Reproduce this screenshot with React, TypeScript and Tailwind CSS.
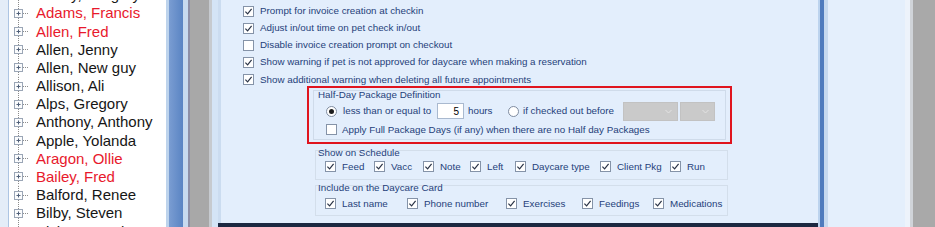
import React from 'react';

type Person = { name: string; red?: boolean };

const people: Person[] = [
  { name: 'Abbey, Gregory' },
  { name: 'Adams, Francis', red: true },
  { name: 'Allen, Fred', red: true },
  { name: 'Allen, Jenny' },
  { name: 'Allen, New guy' },
  { name: 'Allison, Ali' },
  { name: 'Alps, Gregory' },
  { name: 'Anthony, Anthony' },
  { name: 'Apple, Yolanda' },
  { name: 'Aragon, Ollie', red: true },
  { name: 'Bailey, Fred', red: true },
  { name: 'Balford, Renee' },
  { name: 'Bilby, Steven' },
  { name: 'Bishop, Frank' },
];

const mainOptions = [
  { label: 'Prompt for invoice creation at checkin', checked: true },
  { label: 'Adjust in/out time on pet check in/out', checked: true },
  { label: 'Disable invoice creation prompt on checkout', checked: false },
  { label: 'Show warning if pet is not approved for daycare when making a reservation', checked: true },
  { label: 'Show additional warning when deleting all future appointments', checked: true },
];

// fixed column widths, like the WinForms layout
const scheduleItems = [
  { label: 'Feed', w: 'w-[49px]' },
  { label: 'Vacc', w: 'w-[49px]' },
  { label: 'Note', w: 'w-[47px]' },
  { label: 'Left', w: 'w-[45px]' },
  { label: 'Daycare type', w: 'w-[85px]' },
  { label: 'Client Pkg', w: 'w-[70px]' },
  { label: 'Run', w: 'w-auto' },
];

const cardItems = [
  { label: 'Last name', w: 'w-[82px]' },
  { label: 'Phone number', w: 'w-[99px]' },
  { label: 'Exercises', w: 'w-[76px]' },
  { label: 'Feedings', w: 'w-[71px]' },
  { label: 'Medications', w: 'w-auto' },
];

const CheckBox: React.FC<{ checked?: boolean }> = ({ checked }) => (
  <span className="flex h-[11px] w-[11px] shrink-0 items-center justify-center border border-[#8593a8] bg-white">
    {checked && (
      <svg width="9" height="9" viewBox="0 0 9 9">
        <path d="M1.4 4.6 L3.6 6.8 L7.6 1.8" stroke="#2b3447" strokeWidth="1.2" fill="none" />
      </svg>
    )}
  </span>
);

const Radio: React.FC<{ checked?: boolean }> = ({ checked }) => (
  <span className="flex h-[11px] w-[11px] shrink-0 items-center justify-center rounded-full border border-[#7f8ca0] bg-white">
    {checked && <span className="h-[5px] w-[5px] rounded-full bg-[#1c1c1c]" />}
  </span>
);

const Combo: React.FC<{ w: string }> = ({ w }) => (
  <span className={`flex h-[19px] ${w} items-center justify-end border border-[#c2c2c2] bg-[#cacaca] pr-[5px]`}>
    <svg width="7" height="5" viewBox="0 0 7 5">
      <path d="M0.5 1 L3.5 4 L6.5 1" stroke="#e2e2e2" strokeWidth="1" fill="none" />
    </svg>
  </span>
);

const TreeRow: React.FC<{ person: Person }> = ({ person }) => (
  <div className="flex h-[18.18px] items-center">
    <svg width="27" height="18.18" viewBox="0 0 27 18.18" className="shrink-0">
      <line x1="9.5" y1="0" x2="9.5" y2="18.18" stroke="#8a8a8a" strokeWidth="1" strokeDasharray="1 1" />
      <line x1="14" y1="9.5" x2="19" y2="9.5" stroke="#8a8a8a" strokeWidth="1" strokeDasharray="1 1" />
      <rect x="5.5" y="5.5" width="8" height="8" fill="#fbfcfd" stroke="#9ba6b6" />
      <path d="M7.5 9.5 H11.5 M9.5 7.5 V11.5" stroke="#4f5f78" strokeWidth="1" />
    </svg>
    <span className={`whitespace-nowrap text-[15px] leading-none ${person.red ? 'text-[#e8192c]' : 'text-[#161616]'}`}>
      {person.name}
    </span>
  </div>
);

export default function App() {
  return (
    <div className="flex h-[227px] w-[935px] overflow-hidden bg-white font-['Liberation_Sans',Arial,sans-serif]">
      {/* client tree */}
      <div className="flex w-[166px] shrink-0">
        <div className="w-[8px] bg-[#e4edf8]" />
        <div className="w-px bg-[#adc5e3]" />
        <div className="-mt-[14.3px] flex-1 bg-white">
          {people.map((p) => (
            <TreeRow key={p.name} person={p} />
          ))}
        </div>
      </div>

      {/* splitter and frame strips */}
      <div className="w-[3px] shrink-0 bg-[#bdd3ec]" />
      <div className="w-[14px] shrink-0 bg-gradient-to-r from-[#7a9dd2] to-[#5a84c3]" />
      <div className="w-[5px] shrink-0 bg-[#c8daef]" />
      <div className="w-[2px] shrink-0 bg-[#8e8fa6]" />
      <div className="w-[19px] shrink-0 bg-[#a8a8a8]" />
      <div className="w-[3px] shrink-0 bg-[#c6cacf]" />
      <div className="w-[6px] shrink-0 bg-[#d4e4f6]" />

      {/* settings panel */}
      <div className="flex w-[600px] shrink-0 flex-col">
        <div className="flex-1 border-l-[3px] border-[#cbdcf0] bg-[#e3eefc] text-[9.8px] text-[#1f3f7a]">
          <div className="pl-[22px] pt-[2.5px]">
            {mainOptions.map((o) => (
              <div key={o.label} className="flex h-[17.2px] items-center gap-[6px] whitespace-nowrap">
                <CheckBox checked={o.checked} />
                <span>{o.label}</span>
              </div>
            ))}

            {/* highlighted half-day group */}
            <div className="-mt-[2.5px] ml-[64px] w-[425px] border-2 border-[#e0141e] px-[4px] py-[2px]">
              <div className="border border-[#cfdbea] pb-[3px]">
                <div className="-mt-px h-[10px] pl-[4px] leading-[10px]">Half-Day Package Definition</div>
                <div className="mt-[2px] flex h-[19px] items-center whitespace-nowrap">
                  <span className="ml-[12px]">
                    <Radio checked />
                  </span>
                  <span className="ml-[6px] w-[94px]">less than or equal to</span>
                  <span className="flex h-[16px] w-[27px] items-center justify-end border border-[#a9b9cf] bg-white pr-[4px] text-[10px] text-black">
                    5
                  </span>
                  <span className="ml-[4px] w-[40px]">hours</span>
                  <Radio />
                  <span className="ml-[4px] w-[100px]">if checked out before</span>
                  <Combo w="w-[55px]" />
                  <span className="ml-[2px]">
                    <Combo w="w-[35px]" />
                  </span>
                </div>
                <div className="mt-[3px] flex h-[12px] items-center whitespace-nowrap">
                  <span className="ml-[12px]">
                    <CheckBox />
                  </span>
                  <span className="ml-[5px]">Apply Full Package Days (if any) when there are no Half day Packages</span>
                </div>
              </div>
            </div>

            {/* show on schedule */}
            <div className="ml-[72px] mt-[6px] w-[413px] border border-[#d3deeb] pb-[5px]">
              <div className="-mt-[3px] h-[10px] pl-[2px] leading-[10px]">Show on Schedule</div>
              <div className="mt-[2px] flex h-[14px] items-center pl-[9px] whitespace-nowrap">
                {scheduleItems.map((it) => (
                  <div key={it.label} className={`flex items-center gap-[6px] ${it.w}`}>
                    <CheckBox checked />
                    <span>{it.label}</span>
                  </div>
                ))}
              </div>
            </div>

            {/* daycare card */}
            <div className="ml-[72px] mt-[5px] w-[413px] border border-[#d3deeb] pb-[4px]">
              <div className="-mt-[3px] h-[10px] pl-[2px] leading-[10px]">Include on the Daycare Card</div>
              <div className="mt-[4px] flex h-[14px] items-center pl-[9px] whitespace-nowrap">
                {cardItems.map((it) => (
                  <div key={it.label} className={`flex items-center gap-[6px] ${it.w}`}>
                    <CheckBox checked />
                    <span>{it.label}</span>
                  </div>
                ))}
              </div>
            </div>
          </div>
        </div>
        <div className="h-[4px] bg-[#1c2841]" />
      </div>

      {/* right side frame */}
      <div className="w-[2px] shrink-0 bg-[#bcd3ee]" />
      <div className="w-[4px] shrink-0 bg-[#4f7bbd]" />
      <div className="w-[4px] shrink-0 bg-[#c6d9ef]" />
      <div className="w-[77px] shrink-0 bg-[#e4effc]" />
      <div className="w-[5px] shrink-0 bg-[#edf3fb]" />
      <div className="w-[3px] shrink-0 bg-[#d0d4d9]" />
      <div className="flex-1 bg-[#a9a9a9]" />
    </div>
  );
}
